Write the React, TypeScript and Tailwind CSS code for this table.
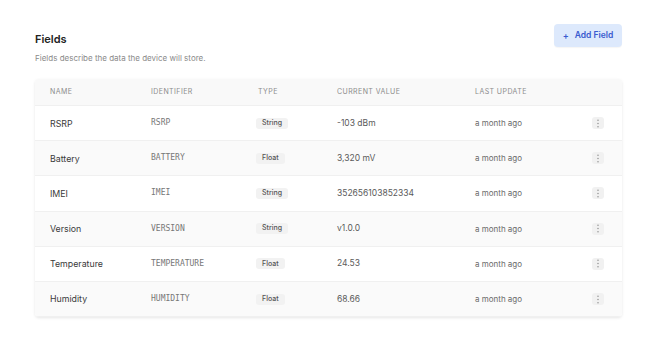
import React from "react";

const rows = [
  { name: "RSRP", id: "RSRP", type: "String", value: "-103 dBm" },
  { name: "Battery", id: "BATTERY", type: "Float", value: "3,320 mV" },
  { name: "IMEI", id: "IMEI", type: "String", value: "352656103852334" },
  { name: "Version", id: "VERSION", type: "String", value: "v1.0.0" },
  { name: "Temperature", id: "TEMPERATURE", type: "Float", value: "24.53" },
  { name: "Humidity", id: "HUMIDITY", type: "Float", value: "68.66" },
];

function Kebab() {
  return (
    <div className="w-[12px] h-[12px] rounded-[3px] bg-[#f1f1f1] flex items-center justify-center">
      <svg width="4" height="9" viewBox="0 0 4 9">
        <circle cx="2" cy="1.3" r="0.8" fill="#9a9a9a" />
        <circle cx="2" cy="4.5" r="0.8" fill="#9a9a9a" />
        <circle cx="2" cy="7.7" r="0.8" fill="#9a9a9a" />
      </svg>
    </div>
  );
}

export default function App() {
  return (
    <div
      className="w-[656px] h-[340px] bg-white px-[34px] pt-[24px]"
      style={{ fontFamily: "Inter, 'Noto Sans', sans-serif" }}
    >
      <div className="flex justify-between items-start pl-[1px]">
        <div className="pt-[8px]">
          <div className="text-[11px] font-semibold text-[#222] leading-[14px]">Fields</div>
          <div className="text-[8px] text-[#8a8a8a] leading-[12px] mt-[6px]">
            Fields describe the data the device will store.
          </div>
        </div>
        <button className="w-[68px] h-[23px] rounded-[4px] bg-[#dde9fc] text-[#3a5bcf] text-[8.5px] font-semibold flex items-center justify-center gap-[6px] shadow-[0_1px_1px_rgba(0,0,0,0.04)]">
          <span className="text-[9px] leading-none">+</span>
          <span>Add Field</span>
        </button>
      </div>
      <div className="mt-[15px] ml-[1px] w-[587px] rounded-[4px] bg-white shadow-[0_1px_3px_rgba(0,0,0,0.10)] overflow-hidden">
        <div className="h-[27px] bg-[#f9f9f9] flex items-center text-[7px] tracking-[0.06em] text-[#8c8c8c] border-b border-[#f0f0f0]">
          <div className="w-[116px] pl-[15px]">NAME</div>
          <div className="w-[107px]">IDENTIFIER</div>
          <div className="w-[79px]">TYPE</div>
          <div className="w-[138px]">CURRENT VALUE</div>
          <div className="flex-1">LAST UPDATE</div>
        </div>
        {rows.map((r, i) => (
          <div
            key={r.name}
            className={`h-[35.2px] flex items-center border-b border-[#f0f0f0] ${
              i % 2 === 1 ? "bg-[#fafafa]" : "bg-white"
            }`}
          >
            <div className="w-[116px] pl-[15px] text-[8.8px] text-[#3a3a3a]">{r.name}</div>
            <div
              className="w-[107px] text-[8px] text-[#777]"
              style={{ fontFamily: "'DejaVu Sans Mono', monospace" }}
            >
              {r.id}
            </div>
            <div className="w-[79px] flex">
              <span className="h-[11px] px-[6px] -ml-[2px] rounded-[3px] bg-[#f2f2f2] text-[7px] font-medium text-[#555] flex items-center">
                {r.type}
              </span>
            </div>
            <div className="w-[138px] text-[8.5px] text-[#5a5a5a]">{r.value}</div>
            <div className="w-[117px] text-[8px] text-[#6a6a6a]">a month ago</div>
            <Kebab />
          </div>
        ))}
      </div>
    </div>
  );
}
